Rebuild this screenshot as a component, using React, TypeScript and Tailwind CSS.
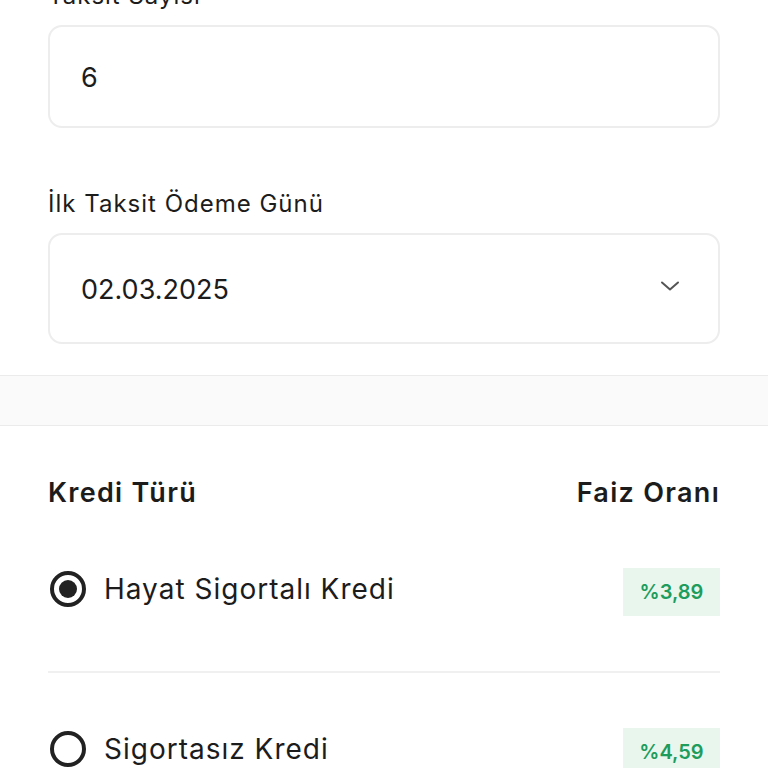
import React from "react";

type Loan = { id: number; name: string; rate: string; selected: boolean };

const loans: Loan[] = [
  { id: 1, name: "Hayat Sigortalı Kredi", rate: "%3,89", selected: true },
  { id: 2, name: "Sigortasız Kredi", rate: "%4,59", selected: false },
];

const Radio: React.FC<{ checked: boolean }> = ({ checked }) => (
  <span className="flex h-[36px] w-[36px] items-center justify-center rounded-full border-[4px] border-[#222222]">
    {checked && <span className="h-[18px] w-[18px] rounded-full bg-[#222222]" />}
  </span>
);

const App: React.FC = () => {
  return (
    <div
      className="h-[768px] w-[768px] overflow-hidden bg-white text-[#1c1c1c]"
      style={{ fontFamily: "Inter, 'Noto Sans', sans-serif" }}
    >
      {/* --- Form fields --- */}
      <div className="mt-[-19px] px-12">
        <div className="flex h-[30px] items-center text-[24px] tracking-[1px]">Taksit Sayısı</div>
        <div className="mt-[14px] flex h-[103px] items-center rounded-[14px] border-2 border-[#ededed] px-[31px] pt-[3px] text-[27px]">
          6
        </div>

        <div className="mt-[61px] flex h-[30px] items-center text-[24px] tracking-[1px]">İlk Taksit Ödeme Günü</div>
        <div className="mt-[14px] flex h-[111px] items-center justify-between rounded-[14px] border-2 border-[#ededed] pl-[31px] pr-[36px] text-[27px]">
          <span className="pt-[3px]">02.03.2025</span>
          <svg width="24" height="24" viewBox="0 0 24 24" fill="none" className="mt-[-6px]">
            <path d="M4 8.5l8 7 8-7" stroke="#555" strokeWidth="2" strokeLinecap="round" strokeLinejoin="round" />
          </svg>
        </div>
      </div>

      {/* --- Separator band --- */}
      <div className="mt-[31px] h-[51px] border-y border-[#ebebeb] bg-[#fafafa]" />

      {/* --- Loan types --- */}
      <div className="px-12">
        <div className="mt-[40px] flex h-[54px] items-center justify-between text-[27px] font-semibold tracking-[1.3px]">
          <span>Kredi Türü</span>
          <span>Faiz Oranı</span>
        </div>
        {loans.map((l, i) => (
          <div
            key={l.id}
            className={`flex items-center justify-between ${
              i === 0 ? "h-[153px] border-b-2 border-[#f0f0f0] pb-[14px]" : "h-[160px] pb-[8px]"
            }`}
          >
            <div className="flex items-center gap-[18px] pl-[2px]">
              <Radio checked={l.selected} />
              <span className="text-[28px] tracking-[1px]">{l.name}</span>
            </div>
            <span className="mt-[6px] flex h-[48px] w-[97px] items-center justify-center bg-[#e8f6ee] text-[20px] font-semibold text-[#1e9c5b]">
              {l.rate}
            </span>
          </div>
        ))}
      </div>
    </div>
  );
};

export default App;
